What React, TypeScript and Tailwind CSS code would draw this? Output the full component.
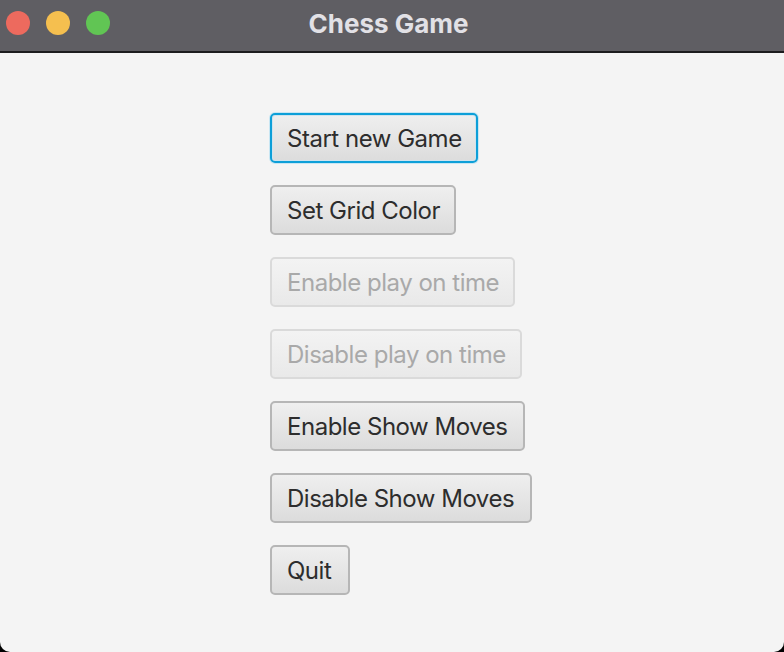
const buttons = [
  { label: 'Start new Game', w: 'w-[208px]', focused: true },
  { label: 'Set Grid Color', w: 'w-[186px]' },
  { label: 'Enable play on time', w: 'w-[245px]', disabled: true },
  { label: 'Disable play on time', w: 'w-[252px]', disabled: true },
  { label: 'Enable Show Moves', w: 'w-[255px]' },
  { label: 'Disable Show Moves', w: 'w-[262px]' },
  { label: 'Quit', w: 'w-[80px]' },
]

export default function App() {
  return (
    <div className="h-[652px] w-[784px] overflow-hidden bg-black font-['Inter',sans-serif]">
      <div className="flex h-full flex-col overflow-hidden rounded-b-[10px] bg-[#f4f4f4]">
        {/* Title bar */}
        <div className="relative flex h-[53px] shrink-0 items-center justify-center border-b-2 border-[#1c1c1e] bg-[#5f5e63] pb-[4px] pr-[7px]">
          <div className="absolute left-[6px] top-[11px] flex gap-[16px]">
            <span className="h-[24px] w-[24px] rounded-full bg-[#ed6a5e]" />
            <span className="h-[24px] w-[24px] rounded-full bg-[#f5bf4f]" />
            <span className="h-[24px] w-[24px] rounded-full bg-[#61c554]" />
          </div>
          <span className="text-[26px] font-bold text-[#e2e1e6]">Chess Game</span>
        </div>

        {/* Menu */}
        <div className="flex flex-col items-start gap-[22px] pl-[270px] pt-[60px]">
          {buttons.map((b) => (
            <button
              key={b.label}
              disabled={b.disabled}
              className={
                'h-[50px] whitespace-nowrap rounded-[5px] px-[15px] pt-[2px] text-left text-[24px] leading-none tracking-[-0.02em] ' +
                b.w +
                (b.disabled
                  ? ' border-2 border-[#dadada] bg-gradient-to-b from-[#f3f3f3] to-[#e9e9e9] text-[#a9a9a9]'
                  : b.focused
                    ? ' border-2 border-[#0d9fd8] bg-gradient-to-b from-[#efefef] to-[#dcdcdc] text-[#2d2d2d] shadow-[0_0_0_1px_#c8e6f3,inset_0_0_0_1px_#cfe3ee]'
                    : ' border-2 border-[#b6b6b6] bg-gradient-to-b from-[#efefef] to-[#dcdcdc] text-[#2d2d2d]')
              }
            >
              {b.label}
            </button>
          ))}
        </div>
      </div>
    </div>
  )
}
